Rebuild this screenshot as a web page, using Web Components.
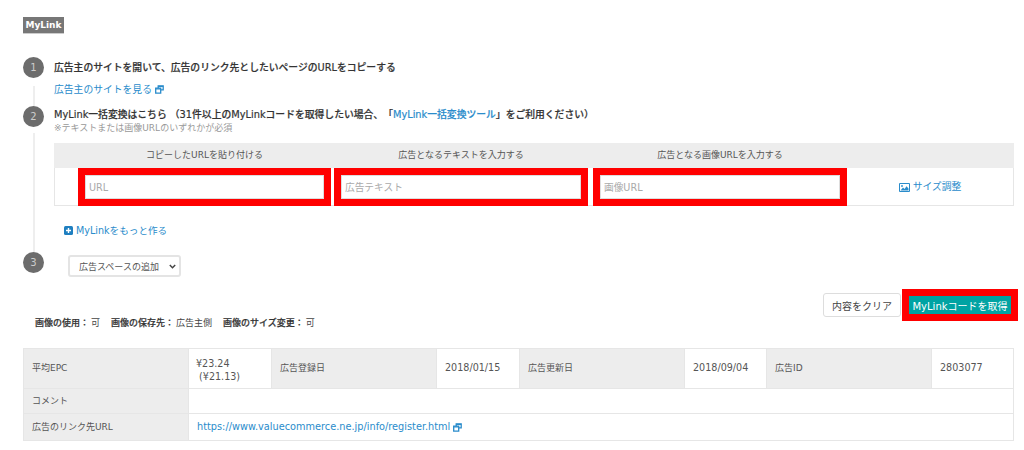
<!DOCTYPE html>
<html lang="ja"><head><meta charset="utf-8"><title>MyLink</title>
<style>
html,body{margin:0;background:#fff}
body{font:10px/1.3 "DejaVu Sans","Noto Sans CJK JP",sans-serif;color:#444;width:1024px;height:450px;overflow:hidden;text-spacing-trim:space-all}
mylink-page{--link:#2a8ccb;--line:#e6e6e6;--head:#ededed}
</style></head><body>
<mylink-page></mylink-page>
<script>
const EXT='<svg width="9" height="9" viewBox="0 0 9 9" style="vertical-align:-1px;margin-left:3px"><path fill="none" stroke="#2a8ccb" stroke-width="1.3" d="M3.2 2.7V.8h5v4H6M.7 3.2h5v4.9h-5z"/><path fill="#2a8ccb" d="M.7 3.2h5v1.4h-5zM3.2.8h5v1.3h-5z"/></svg>';
function def(name,html){customElements.define(name,class extends HTMLElement{constructor(){super();this.attachShadow({mode:'open'}).innerHTML=html;}
 connectedCallback(){const n=this.getAttribute('n');if(n){const e=this.shadowRoot.querySelector('.n');if(e)e.textContent=n;}const p=this.getAttribute('ph');if(p){const e=this.shadowRoot.querySelector('input');if(e)e.placeholder=p;}}});}
def('my-badge',`<style>:host{display:block;width:41px;height:17px;background:#777;color:#fff;font-size:9px;font-weight:700;line-height:16px;text-align:center;border-bottom:1px solid #ccc;box-sizing:border-box}</style><slot></slot>`);
def('my-step',`<style>:host{display:grid;grid-template-columns:21px 1fr;column-gap:10px}
.rail{display:flex;flex-direction:column;align-items:center}
.n{width:21px;height:21px;border-radius:50%;background:#6c6c6c;color:#ccc;font-size:10px;line-height:21px;text-align:center;flex:none}
.l{width:2px;flex:1;background:#eee;margin-top:var(--rail-gap,8px);margin-left:1px}
:host([last]) .l{display:none}
.c{min-width:0}</style><div class="rail"><div class="n"></div><div class="l"></div></div><div class="c"><slot></slot></div>`);
def('my-title',`<style>:host{display:block;font-size:9.8px;font-weight:500;color:#333;-webkit-text-stroke:.2px #333;line-height:var(--lh,20px);padding-top:1px;margin-bottom:-1px;white-space:nowrap}</style><slot></slot>`);
def('my-link',`<style>:host{display:inline-block;font-size:var(--fs,9.8px);color:#2a8ccb;line-height:18px;padding-top:1px;margin-bottom:-1px;white-space:nowrap}</style><slot></slot>`);
def('red-input',`<style>:host{display:block;border:7px solid #f00;height:38px;box-sizing:border-box;background:#fff;margin-bottom:-1px}
input{display:block;box-sizing:border-box;width:100%;height:100%;border:1px solid #ddd;padding:0 3px;margin:0;font:9.7px "DejaVu Sans","Noto Sans CJK JP",sans-serif;background:#fff;outline:0}
input::placeholder{color:#aaa;opacity:1}</style><input type="text">`);
def('link-form',`<style>:host{display:block;width:960px;box-sizing:border-box;border:1px solid var(--line);border-top:0;font-size:9px}
.g{display:grid;grid-template-columns:23px 253px 3px 254px 5px 254px 1fr}
.h{background:var(--head);height:25px;line-height:24px;color:#555;text-align:center;margin-right:-1px;margin-left:-1px;padding-left:1px}
.h span{display:block}
.a{grid-column:2}.b{grid-column:4}.d{grid-column:6}.e{grid-column:7}
.s{display:flex;align-items:center;justify-content:center;color:#2a8ccb;font-size:9.8px;gap:3px;padding-top:1px}</style>
<div class="g h"><span class="a">コピーしたURLを貼り付ける</span><span class="b">広告となるテキストを入力する</span><span class="d">広告となる画像URLを入力する</span></div>
<div class="g"><red-input class="a" ph="URL"></red-input><red-input class="b" ph="広告テキスト"></red-input><red-input class="d" ph="画像URL"></red-input>
<div class="e s"><svg width="11" height="9" viewBox="0 0 11 9"><rect width="11" height="9" rx="1" fill="#2a8ccb"/><rect x="1" y="1" width="9" height="7" fill="#fff"/><path fill="#2a8ccb" d="M1.5 7.5 4 4.5l1.6 1.6L7.5 3.2l2 2.3v2z"/><circle cx="3" cy="3" r=".9" fill="#2a8ccb"/></svg><span>サイズ調整</span></div></div>`);
def('my-actions',`<style>:host{display:flex;justify-content:space-between;height:40px;margin-top:12px}
.i{align-self:flex-end;margin-left:12px;font-size:9px;line-height:14px;margin-bottom:-1px;white-space:nowrap}
.r{display:flex;gap:1px}
.i b{font-weight:500;color:#333;-webkit-text-stroke:.2px #333}
.i span{margin:0 11px 0 2px}
button{font:10px "DejaVu Sans","Noto Sans CJK JP",sans-serif;margin:0;cursor:pointer}
.c{height:24px;width:78px;margin-top:4px;background:#fff;border:1px solid #ddd;border-radius:3px;color:#444;padding:0}
.o{border:7px solid #f00;height:32px;width:116px;box-sizing:border-box;background:#00a3a3;color:#fff;padding:0;border-radius:0}
</style><div class="i"><b>画像の使用：</b><span>可</span><b>画像の保存先：</b><span>広告主側</span><b>画像のサイズ変更：</b><span>可</span></div>
<div class="r"><button class="c">内容をクリア</button><button class="o">MyLinkコードを取得</button></div>`);
def('info-table',`<style>:host{display:grid;grid-template-columns:166px 83px 165px 83px 165px 82px 165px 82px;grid-template-rows:41px 25px 27px;width:991px;margin-top:19px;font-size:9px;color:#555}
div{box-sizing:border-box;padding-left:8px;display:flex;align-items:center;border:solid var(--line);border-width:0 1px 1px 0;min-width:0;white-space:nowrap}
.t{background:var(--head);padding-top:1px}
.t.first{border-left:1px solid var(--line)}
.top{border-top:1px solid var(--line)}
.v{font-size:9.6px}
.w{grid-column:span 7}
a{color:#2a8ccb;font-size:9.75px}
.e{line-height:13px;display:block;padding:7.5px 0 0 7px}</style>
<div class="t first top">平均EPC</div><div class="v e top">¥23.24<br>&nbsp;(¥21.13)</div><div class="t top">広告登録日</div><div class="v top">2018/01/15</div><div class="t top">広告更新日</div><div class="v top">2018/09/04</div><div class="t top">広告ID</div><div class="v top">2803077</div>
<div class="t first">コメント</div><div class="w"></div>
<div class="t first">広告のリンク先URL</div><div class="w"><a>https://www.valuecommerce.ne.jp/info/register.html</a>${EXT}</div>`);
def('my-select',`<style>:host{display:block;position:relative;width:113px;height:22px;margin:3px 0 0 14px}
select{appearance:none;display:block;width:100%;height:100%;box-sizing:border-box;border:2px solid #e4e4e4;border-radius:3px;background:#fff;color:#555;font:9px "DejaVu Sans","Noto Sans CJK JP",sans-serif;padding:2px 0 0 9px;outline:0}
svg{position:absolute;right:5px;top:9px;pointer-events:none}</style>
<select><option>広告スペースの追加</option></select><svg width="7" height="5" viewBox="0 0 7 5"><path d="M.8 1 3.5 3.7 6.2 1" fill="none" stroke="#444" stroke-width="1.5"/></svg>`);
def('mylink-page',`<style>:host{display:block;padding:17px 6px 0 23px}
my-badge{margin-bottom:23px}
.s1 my-link{margin-top:3px}
.s1 .p{height:29px}
.s2{--rail-gap:6px}
.note{font-size:9px;color:#999;line-height:11px;padding-top:1px;margin-bottom:-1px;white-space:nowrap}
link-form{margin-top:10px}
.more{margin:15px 0 13px 10px;display:flex;align-items:center;gap:3px;height:18px;--fs:9.6px}
.s2 my-title{--lh:16px}
.blue{color:#2a8ccb;-webkit-text-stroke-color:#2a8ccb}
.s3{height:25px}
</style>
<my-badge>MyLink</my-badge>
<my-step n="1" class="s1"><my-title>広告主のサイトを開いて、広告のリンク先としたいページのURLをコピーする</my-title><div class="p"><my-link>広告主のサイトを見る${EXT}</my-link></div></my-step>
<my-step n="2" class="s2"><my-title>MyLink一括変換はこちら （31件以上のMyLinkコードを取得したい場合、「<a class="blue">MyLink一括変換ツール</a>」をご利用ください）</my-title><div class="note">※テキストまたは画像URLのいずれかが必須</div><link-form></link-form>
<div class="more"><svg width="9" height="9" viewBox="0 0 9 9"><rect width="9" height="9" rx="1.5" fill="#1f7fc0"/><path d="M4.5 2v5M2 4.5h5" stroke="#fff" stroke-width="1.4"/></svg><my-link>MyLinkをもっと作る</my-link></div></my-step>
<my-step n="3" last class="s3"><my-select></my-select></my-step>
<my-actions></my-actions>
<info-table></info-table>`);
</script></body></html>
